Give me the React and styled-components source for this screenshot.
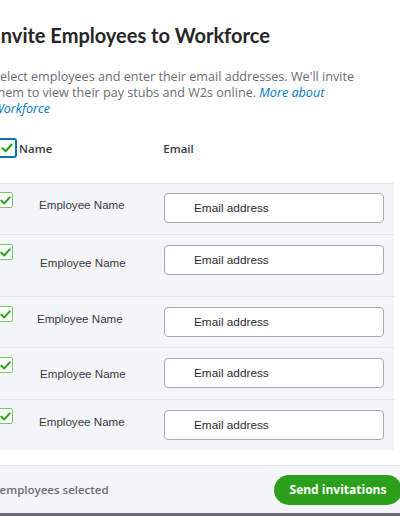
import styled, { createGlobalStyle } from 'styled-components';

const GlobalStyle = createGlobalStyle`
  html, body {
    margin: 0;
    padding: 0;
    background: #ffffff;
    overflow: hidden;
  }
`;

// row layout is a bit irregular in the source, so offsets live with the data
const employees = [
  { id: 1, height: 51, boxTop: 8, nameLeft: 46, nameTop: 14, inputTop: 9 },
  { id: 2, height: 62, boxTop: 9, nameLeft: 47, nameTop: 21, inputTop: 10 },
  { id: 3, height: 51, boxTop: 9, nameLeft: 44, nameTop: 15, inputTop: 10 },
  { id: 4, height: 52, boxTop: 9, nameLeft: 47, nameTop: 19, inputTop: 10 },
  { id: 5, height: 51, boxTop: 8, nameLeft: 46, nameTop: 15, inputTop: 10 },
];

const Check = ({ size = 11 }) => (
  <svg width={size} height={size} viewBox='0 0 12 12'>
    <polyline points='1.5,6.2 4.6,9.2 10.6,2.6' fill='none' stroke='#2ca01c' strokeWidth='2.2' strokeLinecap='round' strokeLinejoin='round' />
  </svg>
);

const App = () => {
  return (
    <>
      <GlobalStyle />
      <Modal>
        <Title>Invite Employees to Workforce</Title>
        <Description>
          Select employees and enter their email addresses. We'll invite them to view their pay stubs and W2s online.{' '}
          <MoreLink>More about Workforce</MoreLink>
        </Description>
        <HeaderRow>
          <HeaderBox>
            <Check size={12} />
          </HeaderBox>
          <HeaderLabel>Name</HeaderLabel>
          <HeaderLabel $email>Email</HeaderLabel>
        </HeaderRow>
        <List>
          {employees.map(emp => (
            <Row key={emp.id} $height={emp.height}>
              <RowBox $top={emp.boxTop}>
                <Check />
              </RowBox>
              <EmployeeName $left={emp.nameLeft} $top={emp.nameTop}>
                Employee Name
              </EmployeeName>
              <EmailField $top={emp.inputTop}>Email address</EmailField>
            </Row>
          ))}
        </List>
        <Footer>
          <SelectedCount>5 employees selected</SelectedCount>
          <SendButton>Send invitations</SendButton>
        </Footer>
      </Modal>
    </>
  );
};

export default App;

const Modal = styled.div`
  width: 407px;
  height: 516px;
  margin-left: -7px;
  display: flex;
  flex-direction: column;
  background: #ffffff;
  font-family: 'Open Sans', 'Noto Sans', sans-serif;
  border-bottom: 3px solid #6b6c72;
  box-sizing: border-box;
`;

const Title = styled.h1`
  margin: 22px 0 0 2px;
  font-family: Lato, 'Open Sans', sans-serif;
  font-size: 20px;
  line-height: 26px;
  font-weight: 700;
  color: #262626;
`;

const Description = styled.p`
  margin: 21px 0 0 0;
  width: 370px;
  font-size: 12.6px;
  line-height: 16px;
  color: #6b6c72;
`;

const MoreLink = styled.span`
  color: #0077c5;
  font-style: italic;
`;

const HeaderRow = styled.div`
  display: flex;
  align-items: center;
  height: 20px;
  margin-top: 21px;
`;

const HeaderBox = styled.div`
  width: 16px;
  height: 16px;
  margin-left: 4px;
  border: 2px solid #0d74b0;
  border-radius: 3px;
  display: flex;
  align-items: center;
  justify-content: center;
  background: #ffffff;
  box-sizing: content-box;
`;

const HeaderLabel = styled.span`
  font-size: 11.5px;
  font-weight: 600;
  color: #393a3d;
  margin-left: ${({ $email }) => ($email ? '111px' : '2px')};
`;

const List = styled.div`
  margin-top: 25px;
  width: 401px;
  display: flex;
  flex-direction: column;
`;

const Row = styled.div`
  height: ${({ $height }) => $height}px;
  display: flex;
  align-items: flex-start;
  background: #f4f5f8;
  border-top: 1px solid #e3e4e8;
  box-sizing: border-box;
`;

const RowBox = styled.div`
  width: 13px;
  height: 14px;
  flex-shrink: 0;
  margin: ${({ $top }) => $top}px 0 0 5px;
  border: 1px solid #7dc56f;
  border-radius: 2px;
  background: #ffffff;
  display: flex;
  align-items: center;
  justify-content: center;
`;

const EmployeeName = styled.span`
  font-family: 'Liberation Sans', Arial, sans-serif;
  font-size: 11.6px;
  line-height: 14px;
  color: #393a3d;
  margin-top: ${({ $top }) => $top}px;
  padding-left: ${({ $left }) => $left - 20}px;
  width: 151px;
  box-sizing: border-box;
  flex-shrink: 0;
`;

const EmailField = styled.div`
  margin-top: ${({ $top }) => $top}px;
  width: 220px;
  height: 30px;
  flex-shrink: 0;
  box-sizing: border-box;
  padding-left: 29px;
  display: flex;
  align-items: center;
  background: #ffffff;
  border: 1px solid #a9aaae;
  border-radius: 4px;
  font-family: 'Liberation Sans', Arial, sans-serif;
  font-size: 11.8px;
  color: #2a2a2a;
`;

const Footer = styled.div`
  margin-top: 15px;
  height: 48px;
  display: flex;
  align-items: center;
  justify-content: space-between;
  background: #f4f5f8;
  border-top: 1px solid #e6e7ea;
`;

const SelectedCount = styled.span`
  font-size: 11.5px;
  font-weight: 600;
  color: #6b6c72;
  margin-left: -3px;
`;

const SendButton = styled.button`
  height: 30px;
  width: 128px;
  margin-right: -2px;
  border: none;
  border-radius: 15px;
  background: #2ca01c;
  color: #ffffff;
  font-family: 'Open Sans', 'Noto Sans', sans-serif;
  font-size: 12px;
  font-weight: 700;
  padding: 0;
`;
